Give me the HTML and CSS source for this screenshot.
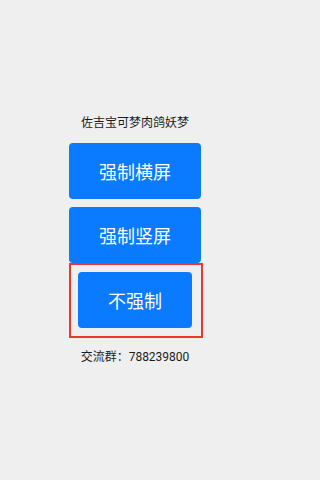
FILE: index.html
```html
<!DOCTYPE html>
<html lang="zh-CN">
<head>
<meta charset="utf-8">
<title>佐吉宝可梦肉鸽妖梦</title>
<link rel="stylesheet" href="styles.css">
</head>
<body>
<div class="page">
  <div class="title">佐吉宝可梦肉鸽妖梦</div>
  <div class="btn first">强制横屏</div>
  <div class="btn">强制竖屏</div>
  <div class="focus">
    <div class="btn inner">不强制</div>
  </div>
  <div class="footer">交流群：788239800</div>
</div>
</body>
</html>
```

FILE: styles.css
```css
html, body {
  margin: 0;
  padding: 0;
  background: #efefef;
}
body {
  font-family: "Roboto", "Noto Sans CJK SC", sans-serif;
  color: #1c1c1c;
}
.page {
  width: 268px;
  display: flex;
  flex-direction: column;
  align-items: center;
  padding-top: 115px;
  padding-left: 1px;
}
.title {
  font-size: 12px;
  line-height: 16px;
  margin-bottom: 12px;
}
.btn {
  width: 132px;
  height: 56px;
  background: #0a7aff;
  border-radius: 4px;
  color: #ffffff;
  font-size: 18px;
  display: flex;
  align-items: center;
  justify-content: center;
}
.btn.first {
  margin-bottom: 8px;
}
.focus {
  border: 2px solid #e8392f;
  padding: 7px 9px 8px 7px;
  margin-left: 2px;
}
.btn.inner {
  width: 114px;
}
.footer {
  font-size: 12px;
  line-height: 16px;
  margin-top: 11px;
}
```
